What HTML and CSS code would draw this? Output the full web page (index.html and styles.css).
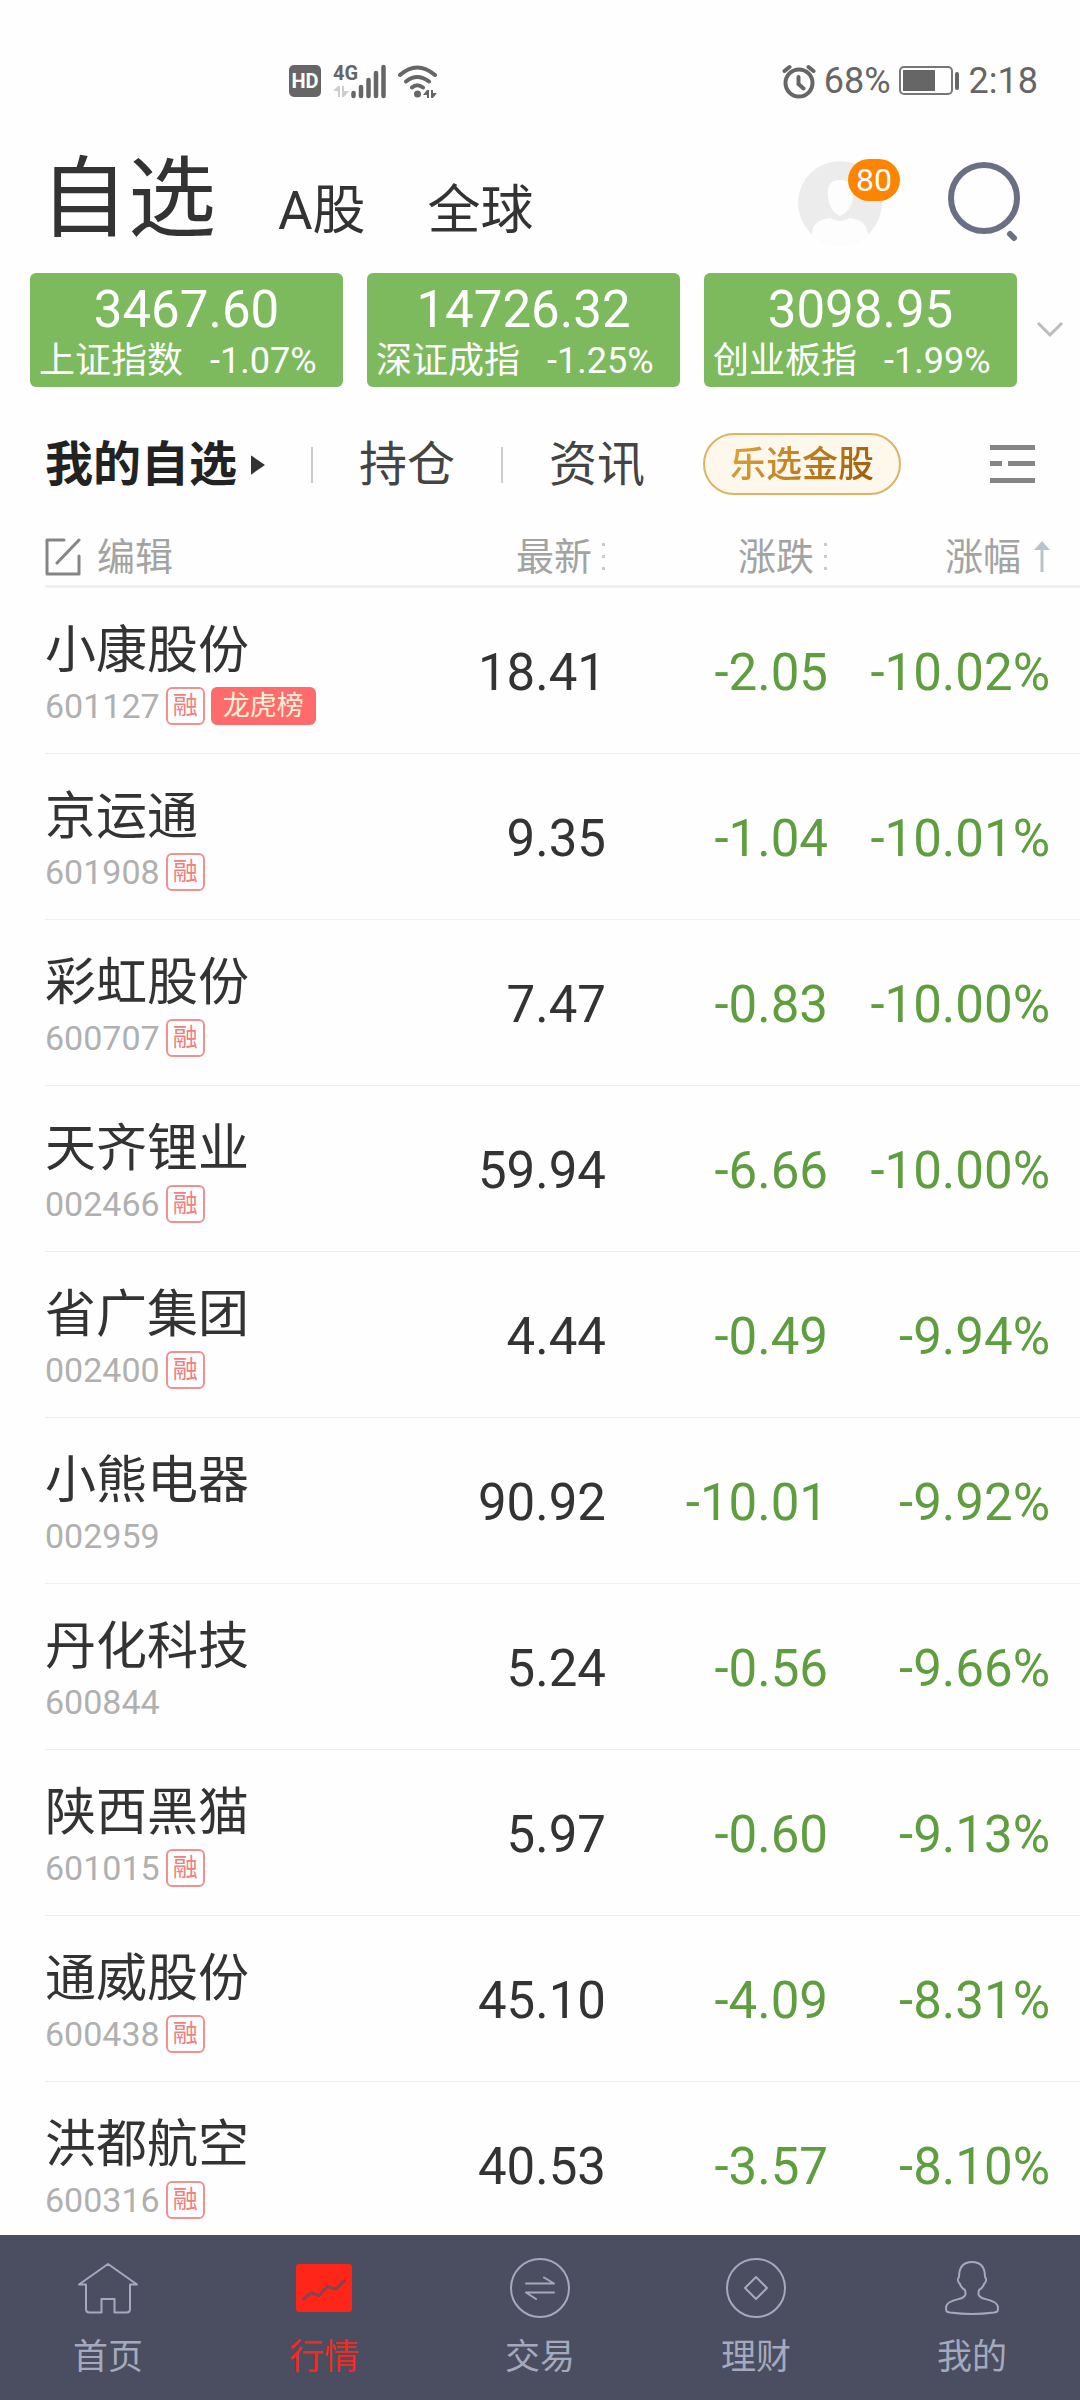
FILE: index.html
```html
<!DOCTYPE html>
<html lang="zh-CN">
<head>
<meta charset="utf-8">
<meta name="viewport" content="width=device-width, initial-scale=1">
<title>自选</title>
<link rel="stylesheet" href="styles.css">
</head>
<body>
  <div class="status-bar">
    <div class="status-left">
      <span class="hd">HD</span>
      <svg class="signal" width="56" height="36" viewBox="0 0 56 36">
        <text x="0" y="17" class="signal-text">4G</text>
        <path d="M0 28l5-5h2v11H5v-6zM9 23h2v5h5l-5 6H9z" fill="#ccc"/>
        <path d="M20.500 30v3M28 24v9M35.500 17v16M43 10v23M50.500 4v29" stroke="#666" stroke-width="4.500" stroke-linecap="round"/>
      </svg>
      <svg width="42" height="36" viewBox="0 0 42 36" fill="none" stroke="#666" stroke-width="4" stroke-linecap="round">
        <path d="M3 12q17-15 35 0M9 18.500q11-9 23 0M15 24.500q5-4.500 11 0"/>
        <circle cx="20.500" cy="31" r="3.500" fill="#666" stroke="none"/>
        <path d="M26 32l4-5h2v8h-2v-3zM34 27h2v3h4l-4 5h-2z" fill="#666" stroke="none"/>
      </svg>
    </div>
    <div class="status-right">
      <svg width="34" height="36" viewBox="0 0 34 36" fill="none" stroke="#666" stroke-width="4" stroke-linecap="round">
        <circle cx="17" cy="20" r="13.500"/>
        <path d="M16.500 14v7l5 4.500M2.500 8l5-4M31.500 8l-5-4"/>
      </svg>
      <span>68%</span>
      <svg class="battery" width="62" height="32" viewBox="0 0 62 32">
        <rect x="1" y="2" width="52" height="27" rx="4" fill="none" stroke="#777" stroke-width="2"/>
        <rect x="4" y="5" width="32" height="21" fill="#666"/>
        <rect x="56" y="7" width="4" height="18" rx="2" fill="#666"/>
      </svg>
      <span>2:18</span>
    </div>
  </div>

  <header class="header">
    <nav class="market-nav">
      <a href="#" class="active">自选</a>
      <a href="#">A股</a>
      <a href="#">全球</a>
    </nav>
    <div class="header-actions">
      <button class="avatar" aria-label="消息">
        <svg width="84" height="84" viewBox="0 0 84 84">
          <circle cx="42" cy="42" r="42" fill="#ececec"/>
          <path d="M42 19c-10 0-13 6-12 16 1 12 5 16 12 20 7-4 12-8 13-20 1-10-3-16-13-16z" fill="#fdfdfd"/>
          <path d="M14 74c0-12 7-15 18-17q10 6 20 0c11 2 17 5 18 17q-28 20-56 0z" fill="#fdfdfd"/>
        </svg>
        <span class="badge">80</span>
      </button>
      <button class="search" aria-label="搜索">
        <svg width="76" height="84" viewBox="0 0 76 84" fill="none" stroke="#6b6f86" stroke-width="6" stroke-linecap="round">
          <circle cx="38" cy="37" r="33"/>
          <path d="M64 73l4 4"/>
        </svg>
      </button>
    </div>
  </header>

  <section class="indices">
    <a href="#" class="index-card">
      <span class="index-value">3467.60</span>
      <span class="index-info"><span>上证指数</span><span>-1.07%</span></span>
    </a>
    <a href="#" class="index-card">
      <span class="index-value">14726.32</span>
      <span class="index-info"><span>深证成指</span><span>-1.25%</span></span>
    </a>
    <a href="#" class="index-card">
      <span class="index-value">3098.95</span>
      <span class="index-info"><span>创业板指</span><span>-1.99%</span></span>
    </a>
    <button class="expand" aria-label="展开">
      <svg width="28" height="18" viewBox="0 0 28 18" fill="none" stroke="#bbb" stroke-width="3">
        <path d="M2 2l12 12L26 2"/>
      </svg>
    </button>
  </section>

  <nav class="tabs">
    <a href="#" class="tab active">我的自选
      <svg width="14" height="20" viewBox="0 0 14 20"><path d="M0 1q0-1 1 0l13 9-13 9q-1 1-1 0z" fill="#333"/></svg>
    </a>
    <a href="#" class="tab">持仓</a>
    <a href="#" class="tab">资讯</a>
    <a href="#" class="gold-tab"><span>乐选金股</span></a>
    <button class="menu" aria-label="菜单">
      <svg width="45" height="38" viewBox="0 0 45 38" fill="#858585">
        <path d="M0 0h45v5H0zM0 16h12v5H0zM18 16h27v5H18zM0 33h45v5H0z"/>
      </svg>
    </button>
  </nav>

  <main class="list">
    <table class="stock-table">
      <colgroup>
        <col>
        <col class="col-price">
        <col class="col-change">
        <col class="col-percent">
      </colgroup>
      <thead>
        <tr>
          <th>
            <button class="edit">
              <svg width="36" height="38" viewBox="0 0 36 38" fill="none" stroke="#858585" stroke-width="3" stroke-linecap="round" stroke-linejoin="round">
                <path d="M19 2H2v34h32V18M34 2L12 25"/>
              </svg>
              编辑
            </button>
          </th>
          <th><button class="sort">最新<svg width="4" height="28" viewBox="0 0 4 28"><path d="M0 0h3v3H0zM0 12h3v3H0zM0 24h3v3H0z" fill="#c3ccd5"/></svg></button></th>
          <th><button class="sort">涨跌<svg width="4" height="28" viewBox="0 0 4 28"><path d="M0 0h3v3H0zM0 12h3v3H0zM0 24h3v3H0z" fill="#c3ccd5"/></svg></button></th>
          <th><button class="sort sorted">涨幅<svg width="16" height="32" viewBox="0 0 16 32"><path d="M8 0l8 9H9.500v22h-3V9H0z" fill="#b9c3ce"/></svg></button></th>
        </tr>
      </thead>
      <tbody id="stock-list"></tbody>
    </table>
  </main>

  <footer class="bottom-nav">
    <a href="#">
      <svg width="60" height="60" viewBox="0 0 60 60"><path d="M30 6L1 26.500h7V51q0 3.500 3.500 3.500h12V41h13v13.500h12q3.500 0 3.500-3.500V26.500h7z"/></svg>
      首页
    </a>
    <a href="#" class="active">
      <svg width="60" height="60" viewBox="0 0 60 60"><rect x="2" y="6" width="56" height="48" rx="3" fill="#ff2518" stroke="none"/><path d="M9.500 41l7.500-6 8 2.500 8-9 9 2.500 8.500-8.500" stroke="#83454f" stroke-width="3"/></svg>
      行情
    </a>
    <a href="#">
      <svg width="60" height="60" viewBox="0 0 60 60"><circle cx="30" cy="30" r="29"/><path d="M16 25.500h28l-10-6M44 34.500H16l10 6.500"/></svg>
      交易
    </a>
    <a href="#">
      <svg width="60" height="60" viewBox="0 0 60 60"><circle cx="30" cy="30" r="29"/><path d="M30 19l11 11-11 11-11-11z"/></svg>
      理财
    </a>
    <a href="#">
      <svg width="60" height="60" viewBox="0 0 60 60"><path d="M30 4c-9 0-13 5-13 15-2 2-1 5 1 7 1 3 3 5 5 6 1 4 1 6-3 8-6 2-16 3-16 10 0 4 1 4 4 4.500q22 3 44 0c3-.5 4-.5 4-4.500 0-7-10-8-16-10-4-2-4-4-3-8 2-1 4-3 5-6 2-2 3-5 1-7 0-10-4-15-13-15z"/></svg>
      我的
    </a>
  </footer>

  <script>
    const stocks = [
      { name: "小康股份", code: "601127", margin: true, top: true, price: "18.41", change: "-2.05", percent: "-10.02%" },
      { name: "京运通", code: "601908", margin: true, price: "9.35", change: "-1.04", percent: "-10.01%" },
      { name: "彩虹股份", code: "600707", margin: true, price: "7.47", change: "-0.83", percent: "-10.00%" },
      { name: "天齐锂业", code: "002466", margin: true, price: "59.94", change: "-6.66", percent: "-10.00%" },
      { name: "省广集团", code: "002400", margin: true, price: "4.44", change: "-0.49", percent: "-9.94%" },
      { name: "小熊电器", code: "002959", price: "90.92", change: "-10.01", percent: "-9.92%" },
      { name: "丹化科技", code: "600844", price: "5.24", change: "-0.56", percent: "-9.66%" },
      { name: "陕西黑猫", code: "601015", margin: true, price: "5.97", change: "-0.60", percent: "-9.13%" },
      { name: "通威股份", code: "600438", margin: true, price: "45.10", change: "-4.09", percent: "-8.31%" },
      { name: "洪都航空", code: "600316", margin: true, price: "40.53", change: "-3.57", percent: "-8.10%" }
    ];

    function createRow(stock) {
      return `
        <tr>
          <td>
            <div class="stock-name">${stock.name}</div>
            <div class="stock-meta">
              <span class="stock-code">${stock.code}</span>
              ${stock.margin ? '<span class="tag">融</span>' : ''}
              ${stock.top ? '<span class="tag tag-top">龙虎榜</span>' : ''}
            </div>
          </td>
          <td class="num">${stock.price}</td>
          <td class="num down">${stock.change}</td>
          <td class="num down">${stock.percent}</td>
        </tr>
      `;
    }

    document.getElementById('stock-list').innerHTML = stocks.map(createRow).join('');
  </script>
</body>
</html>
```
FILE: styles.css
```css
* {
  box-sizing: border-box;
}
body {
  margin: 0;
  height: 100vh;
  display: flex;
  flex-direction: column;
  font-family: Roboto, "Noto Sans CJK SC", sans-serif;
  background-color: #fefefe;
  color: #333;
}
a {
  color: inherit;
  text-decoration: none;
}
button {
  padding: 0;
  border: none;
  background: none;
  font: inherit;
  color: inherit;
  cursor: pointer;
}
svg {
  display: block;
  flex: none;
}

/* status bar */
.status-bar {
  display: flex;
  justify-content: space-between;
  align-items: center;
  height: 140px;
  padding: 22px 42px 0 289px;
  font-size: 36px;
  color: #666;
}
.status-left,
.status-right {
  display: flex;
  align-items: center;
}
.status-left {
  gap: 8px;
}
.hd {
  width: 32px;
  margin-right: 4px;
  border-radius: 5px;
  background-color: #666;
  color: #fff;
  font-size: 20px;
  font-weight: bold;
  line-height: 32px;
  text-align: center;
}
.signal-text {
  font-size: 20px;
  font-weight: bold;
  fill: #666;
}
.status-right {
  gap: 8px;
}

/* header */
.header {
  display: flex;
  justify-content: space-between;
  align-items: center;
  height: 126px;
  padding: 0 58px 0 40px;
}
.market-nav {
  display: flex;
  align-items: baseline;
  gap: 62px;
  padding-top: 4px;
  font-size: 53px;
  line-height: 112px;
}
.market-nav .active {
  font-size: 88px;
}
.header-actions {
  display: flex;
  align-items: center;
  gap: 64px;
}
.avatar {
  position: relative;
}
.badge {
  position: absolute;
  top: -2px;
  left: 50px;
  width: 52px;
  border-radius: 21px;
  background-color: #ff8400;
  color: #fff;
  font-size: 32px;
  line-height: 42px;
  text-align: center;
}

/* index cards */
.indices {
  display: flex;
  gap: 24px;
  padding: 7px 21px 0 30px;
}
.index-card {
  flex: 1;
  height: 114px;
  padding: 9px 9px 0;
  border-radius: 6px;
  background-color: #7dba5e;
  color: #fff;
}
.index-value {
  display: block;
  font-size: 51px;
  line-height: 56px;
  text-align: center;
}
.index-info {
  display: flex;
  gap: 27px;
  font-size: 36px;
  line-height: 46px;
}
.expand {
  width: 18px;
  display: flex;
  align-items: center;
  justify-content: center;
}

/* tabs */
.tabs {
  display: flex;
  align-items: center;
  height: 148px;
  padding: 6px 45px 0;
  font-size: 48px;
  line-height: 60px;
  color: #444;
}
.tab {
  display: flex;
  align-items: center;
  padding-top: 2px;
}
.tab + .tab::before {
  content: "";
  width: 2px;
  height: 36px;
  margin: 0 46px;
  background-color: #ccc;
}
.tab.active {
  gap: 14px;
  font-weight: bold;
  color: #222;
}
.gold-tab {
  margin-left: 58px;
  padding: 2px 25px 0;
  border: 2px solid #dcb462;
  border-radius: 31px;
  background-color: #fef7eb;
  font-size: 36px;
  font-weight: 500;
  line-height: 56px;
}
.gold-tab span {
  background: linear-gradient(120deg, #dfa43a, #9c5a08);
  -webkit-background-clip: text;
  background-clip: text;
  color: transparent;
}
.menu {
  margin-left: auto;
}

/* stock list */
.list {
  flex: 1;
  min-height: 0;
  overflow: hidden;
  padding-left: 45px;
}
.stock-table {
  width: 100%;
  border-collapse: separate;
  border-spacing: 0;
  table-layout: fixed;
}
.col-price {
  width: 240px;
}
.col-change {
  width: 222px;
}
.col-percent {
  width: 252px;
}
.stock-table th,
.stock-table td {
  padding: 0;
  border-bottom: 1px solid #eee;
  text-align: right;
}
.stock-table th {
  padding-bottom: 6px;
  border-bottom: 3px solid #f0f0f0;
  font-size: 38px;
  font-weight: normal;
  line-height: 44px;
  color: #a3a3a3;
}
.stock-table td {
  height: 166px;
  padding-top: 4px;
}
.stock-table th:first-child,
.stock-table td:first-child {
  text-align: left;
}
.stock-table th:last-child,
.stock-table td:last-child {
  padding-right: 30px;
}
.edit,
.sort {
  display: inline-flex;
  align-items: center;
  gap: 10px;
  vertical-align: top;
}
.edit {
  gap: 16px;
}
.sort.sorted {
  gap: 13px;
}
.stock-name {
  font-size: 51px;
  line-height: 60px;
  color: #333;
}
.stock-meta {
  display: flex;
  align-items: center;
  gap: 6px;
  height: 38px;
  margin-top: 6px;
}
.stock-code {
  font-size: 34px;
  color: #b0b0b0;
}
.tag {
  padding: 0 5px;
  border: 2px solid #f09090;
  border-radius: 6px;
  font-size: 25px;
  line-height: 34px;
  color: #f08080;
}
.tag-top {
  padding: 0 10px;
  border-color: #ff6b6b;
  background-color: #ff6b6b;
  font-size: 27px;
  color: #fff0d8;
}
.num {
  font-size: 51px;
}
.down {
  color: #5f9e3e;
}

/* bottom nav */
.bottom-nav {
  display: flex;
  height: 165px;
  background-color: #4a4e60;
  color: #a5a9bd;
}
.bottom-nav a {
  flex: 1;
  display: flex;
  flex-direction: column;
  align-items: center;
  gap: 16px;
  padding-top: 23px;
  font-size: 35px;
  line-height: 48px;
}
.bottom-nav svg {
  fill: none;
  stroke: #a5a9bd;
  stroke-width: 2;
  stroke-linejoin: round;
  stroke-linecap: round;
}
.bottom-nav .active {
  color: #f5291f;
}
```
